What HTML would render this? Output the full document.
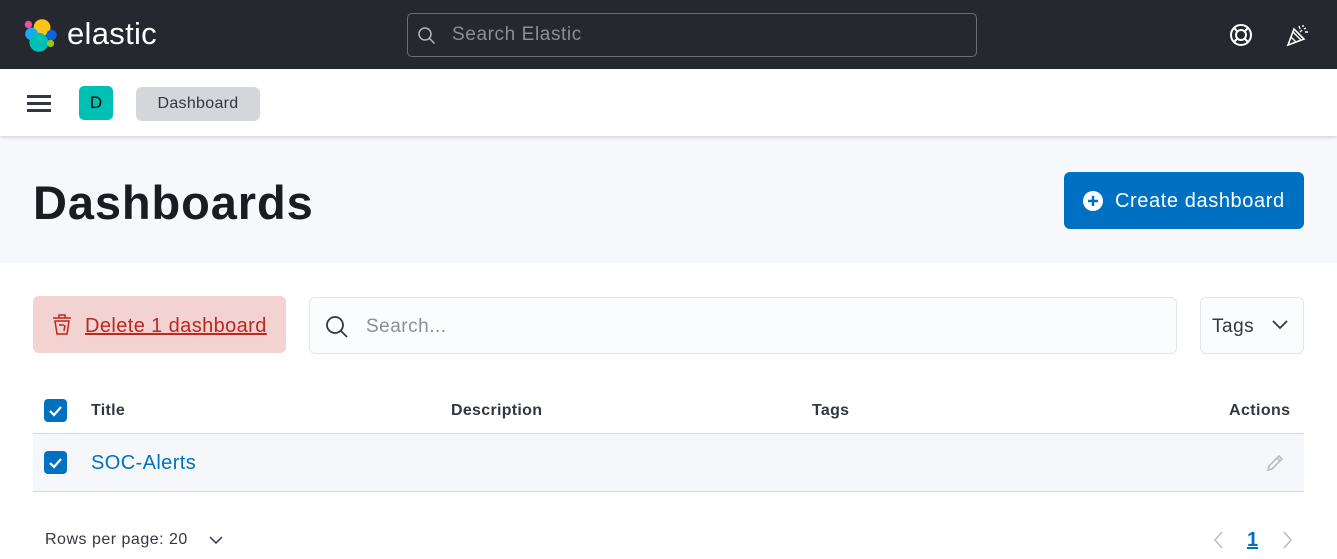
<!DOCTYPE html>
<html><head><style>
*{box-sizing:border-box;margin:0;padding:0}
body{width:1337px;height:559px;overflow:hidden;font-family:"Liberation Sans",sans-serif;background:#fff;position:relative;color:#1a1c21}
.a{position:absolute}
</style></head><body>
<div class="a" style="left:0;top:0;width:1337px;height:69px;background:#25282f"></div>
<svg class="a" style="left:21px;top:16px" width="40" height="38" viewBox="0 0 38 36">
<circle cx="20" cy="11" r="8" fill="#fec514"/><circle cx="7" cy="8" r="3.5" fill="#f04e98"/>
<circle cx="10" cy="17" r="6" fill="#1ba9f5"/><circle cx="29" cy="18" r="5" fill="#0b64dd"/>
<circle cx="17" cy="25" r="9" fill="#00bfb3"/><circle cx="28" cy="26" r="3.5" fill="#93c90e"/>
</svg>
<div class="a" style="left:67px;top:16px;font-size:31px;color:#fff;letter-spacing:0.3px">elastic</div>
<div class="a" style="left:407px;top:13px;width:570px;height:44px;border:1px solid #6a6e78;border-radius:5px;background:#25282f"></div>
<svg class="a" style="left:417px;top:26px" width="20" height="20" viewBox="0 0 20 20"><circle cx="8" cy="8" r="6" fill="none" stroke="#b0b4bd" stroke-width="1.5"/><path d="M12.5 12.5l5 5" stroke="#b0b4bd" stroke-width="1.5"/></svg>
<div class="a" style="left:452px;top:24px;font-size:19px;color:#8a8e97;letter-spacing:0.6px">Search Elastic</div>
<svg class="a" style="left:1229px;top:23px" width="24" height="24" viewBox="0 0 24 24"><circle cx="12" cy="12" r="10" fill="none" stroke="#fff" stroke-width="2"/><circle cx="12" cy="12" r="5" fill="none" stroke="#fff" stroke-width="2"/><path d="M5 5l4 4M19 5l-4 4M5 19l4-4M19 19l-4-4" stroke="#fff" stroke-width="2"/></svg>
<svg class="a" style="left:1285px;top:22px" width="26" height="26" viewBox="0 0 26 26"><path d="M3 23L9 7l10 10z" fill="none" stroke="#fff" stroke-width="1.6"/><path d="M6 15l5 5M8 10l8 8" stroke="#fff" stroke-width="1.4"/><path d="M14 4l1 3M18 3v2M21 6l-2 1M20 10l3 0M17 8l-2 2" stroke="#fff" stroke-width="1.4"/></svg>
<div class="a" style="left:0;top:69px;width:1337px;height:67px;background:#fff;box-shadow:0 2px 3px rgba(0,0,0,.12);z-index:2"></div>
<div class="a" style="left:0;top:136px;width:1337px;height:127px;background:#f7f8fc"></div>
<div class="a" style="z-index:3;left:27px;top:95px;width:24px;height:3px;background:#343741;box-shadow:0 7px 0 #343741,0 14px 0 #343741"></div>
<div class="a" style="z-index:3;left:79px;top:86px;width:34px;height:34px;background:#00bfb3;border-radius:5px;text-align:center;line-height:34px;font-size:17px;color:#000">D</div>
<div class="a" style="z-index:3;left:136px;top:87px;width:124px;height:34px;border-radius:6px;text-align:center;line-height:34px;font-size:16px;color:#343741;background:#d4d6da;letter-spacing:0.3px">Dashboard</div>
<div class="a" style="left:33px;top:175px;font-size:47px;font-weight:bold;color:#1a1c21;letter-spacing:0.9px">Dashboards</div>
<div class="a" style="left:1064px;top:172px;width:240px;height:57px;background:#0071c2;border-radius:6px"></div>
<svg class="a" style="left:1082px;top:190px" width="22" height="22" viewBox="0 0 22 22"><circle cx="11" cy="11" r="10" fill="#fff"/><path d="M11 6v10M6 11h10" stroke="#0071c2" stroke-width="2.4"/></svg>
<div class="a" style="left:1115px;top:190px;font-size:20px;color:#fff;letter-spacing:0.6px">Create dashboard</div>
<div class="a" style="left:33px;top:296px;width:253px;height:57px;background:#f3d3d1;border-radius:6px"></div>
<svg class="a" style="left:50px;top:313px" width="24" height="24" viewBox="0 0 24 24"><path d="M3 5h18M9 5V2h6v3M5 8h14l-2 13H7z" fill="none" stroke="#bd271e" stroke-width="1.5"/><path d="M9 12h5M15 12l-1 6" stroke="#bd271e" stroke-width="1.5"/></svg>
<div class="a" style="left:85px;top:315px;font-size:20px;color:#bd271e;text-decoration:underline;letter-spacing:0.4px">Delete 1 dashboard</div>
<div class="a" style="left:309px;top:297px;width:868px;height:57px;background:#fbfcfd;border:1px solid #e3e6ec;border-radius:6px"></div>
<svg class="a" style="left:324px;top:314px" width="26" height="26" viewBox="0 0 26 26"><circle cx="11" cy="11" r="8" fill="none" stroke="#343741" stroke-width="1.8"/><path d="M17 17l6 6" stroke="#343741" stroke-width="1.8"/></svg>
<div class="a" style="left:366px;top:316px;font-size:19px;color:#8a8e97;letter-spacing:0.5px">Search...</div>
<div class="a" style="left:1200px;top:297px;width:104px;height:57px;background:#fbfcfd;border:1px solid #e3e6ec;border-radius:6px"></div>
<div class="a" style="left:1212px;top:316px;font-size:19px;color:#343741;letter-spacing:0.5px">Tags</div>
<svg class="a" style="left:1271px;top:319px" width="18" height="12" viewBox="0 0 18 12"><path d="M2 2l7 7 7-7" fill="none" stroke="#343741" stroke-width="1.8"/></svg>
<div class="a" style="left:44px;top:399px;width:23px;height:23px;background:#0071c2;border-radius:4px"></div>
<svg class="a" style="left:44px;top:399px" width="23" height="23" viewBox="0 0 23 23"><path d="M6 12l4 4 7-8" fill="none" stroke="#fff" stroke-width="2.2"/></svg>
<div class="a" style="left:91px;top:402px;font-size:16px;font-weight:bold;color:#343741;letter-spacing:0.3px">Title</div>
<div class="a" style="left:451px;top:402px;font-size:16px;font-weight:bold;color:#343741;letter-spacing:0.3px">Description</div>
<div class="a" style="left:812px;top:402px;font-size:16px;font-weight:bold;color:#343741;letter-spacing:0.3px">Tags</div>
<div class="a" style="left:1229px;top:402px;font-size:16px;font-weight:bold;color:#343741;letter-spacing:0.4px">Actions</div>
<div class="a" style="left:33px;top:433px;width:1271px;height:59px;background:#f5f7fb;border-top:1px solid #d3dae6;border-bottom:1px solid #d3dae6"></div>
<div class="a" style="left:44px;top:451px;width:23px;height:23px;background:#0071c2;border-radius:4px"></div>
<svg class="a" style="left:44px;top:451px" width="23" height="23" viewBox="0 0 23 23"><path d="M6 12l4 4 7-8" fill="none" stroke="#fff" stroke-width="2.2"/></svg>
<div class="a" style="left:91px;top:452px;font-size:20px;color:#0071c2;letter-spacing:0.4px">SOC-Alerts</div>
<svg class="a" style="left:1264px;top:452px" width="22" height="22" viewBox="0 0 22 22"><path d="M4 18l1-4L15 4l3 3L8 17z" fill="none" stroke="#b8bcc4" stroke-width="1.6"/><path d="M13 6l3 3" stroke="#b8bcc4" stroke-width="1.6"/></svg>
<div class="a" style="left:45px;top:531px;font-size:16px;color:#343741;letter-spacing:0.5px">Rows per page: 20</div>
<svg class="a" style="left:208px;top:535px" width="16" height="10" viewBox="0 0 16 10"><path d="M2 2l6 6 6-6" fill="none" stroke="#343741" stroke-width="1.5"/></svg>
<svg class="a" style="left:1212px;top:530px" width="14" height="20" viewBox="0 0 14 20"><path d="M10 2L3 10l7 8" fill="none" stroke="#b8bcc4" stroke-width="1.5"/></svg>
<div class="a" style="left:1247px;top:529px;font-size:20px;font-weight:bold;color:#0071c2;text-decoration:underline">1</div>
<svg class="a" style="left:1280px;top:530px" width="14" height="20" viewBox="0 0 14 20"><path d="M4 2l7 8-7 8" fill="none" stroke="#b8bcc4" stroke-width="1.5"/></svg>
</body></html>
